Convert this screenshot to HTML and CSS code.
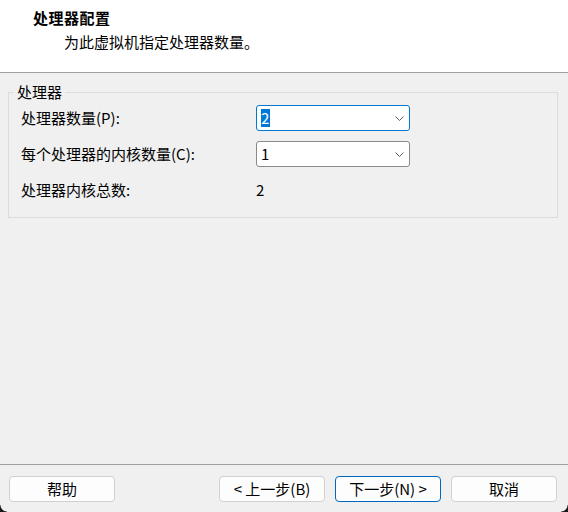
FILE: index.html
```html
<!DOCTYPE html>
<html lang="zh-CN">
<head>
<meta charset="utf-8">
<title>处理器配置</title>
<link rel="stylesheet" href="styles.css">
</head>
<body>
<div class="wizard">
  <header class="head">
    <div class="title">处理器配置</div>
    <div class="subtitle">为此虚拟机指定处理器数量。</div>
  </header>
  <main class="content">
    <fieldset class="group">
      <legend class="legend">处理器</legend>
      <div class="rows">
        <label class="lbl">处理器数量(P):</label>
        <div class="combo focused">
          <span class="val sel">2</span>
          <svg class="chev" width="9" height="5" viewBox="0 0 9 5"><path d="M0.5 0.5 L4.5 4.5 L8.5 0.5" fill="none" stroke="#5f5f5f" stroke-width="1"/></svg>
        </div>
        <label class="lbl">每个处理器的内核数量(C):</label>
        <div class="combo">
          <span class="val">1</span>
          <svg class="chev" width="9" height="5" viewBox="0 0 9 5"><path d="M0.5 0.5 L4.5 4.5 L8.5 0.5" fill="none" stroke="#5f5f5f" stroke-width="1"/></svg>
        </div>
        <span class="lbl">处理器内核总数:</span>
        <span class="total">2</span>
      </div>
    </fieldset>
  </main>
  <footer class="foot">
    <button class="btn">帮助</button>
    <div class="spacer"></div>
    <button class="btn">&lt; 上一步(B)</button>
    <button class="btn default">下一步(N) &gt;</button>
    <button class="btn">取消</button>
  </footer>
  <div class="corner left"></div>
  <div class="corner right"></div>
</div>
</body>
</html>
```

FILE: styles.css
```css
* { box-sizing: border-box; }
html, body { margin: 0; padding: 0; }
body {
  background: #f0f0f0;
  font-family: "Noto Sans CJK SC", "Noto Sans", sans-serif;
  font-size: 15px;
  color: #000;
}
.wizard {
  position: relative;
  height: 512px;
  display: flex;
  flex-direction: column;
}
.head {
  height: 73px;
  background: #fff;
  border-bottom: 1px solid #a0a0a0;
  padding: 8px 0 0 33px;
}
.title {
  font-weight: bold;
  line-height: 20px;
  letter-spacing: 0.5px;
}
.subtitle {
  margin-top: 4px;
  margin-left: 31px;
  line-height: 20px;
}
.content {
  flex: 1;
  padding-top: 9px;
}
.group {
  margin: 0 10px 0 8px;
  padding: 0 12px 14px 12px;
  border: 1px solid #dcdcdc;
  min-width: 0;
}
.legend {
  padding: 0 3px;
  margin-left: -7px;
  line-height: 20px;
}
.rows {
  display: grid;
  grid-template-columns: 235px 154px;
  grid-auto-rows: 26px;
  row-gap: 10px;
  padding-top: 3px;
  align-items: center;
}
.lbl { line-height: 26px; }
.combo {
  height: 26px;
  background: #fff;
  border: 1px solid #8a8a8a;
  border-radius: 3px;
  display: flex;
  align-items: center;
  padding: 0 5px 0 4px;
}
.combo.focused { border-color: #0078d4; }
.val {
  flex: 1;
  line-height: 18px;
}
.val.sel {
  flex: 0 0 auto;
  background: #0078d7;
  color: #fff;
  padding: 0 1px 0 0;
  margin-right: auto;
}
.chev { display: block; }
.total { line-height: 26px; }
.foot {
  border-top: 1px solid #a0a0a0;
  height: 48px;
  padding: 11px 11px 10px 9px;
  display: flex;
  gap: 10px;
}
.spacer { flex: 1; }
.btn {
  width: 106px;
  height: 26px;
  background: #fdfdfd;
  border: 1px solid #d0d0d0;
  border-radius: 4px;
  font-family: inherit;
  font-size: 15px;
  color: #000;
  padding: 0;
  line-height: 22px;
}
.btn.default { border-color: #0067c0; }
.corner {
  position: absolute;
  bottom: 0;
  width: 7px;
  height: 7px;
}
.corner.left {
  left: 0;
  background: radial-gradient(circle at 100% 0, transparent 6px, #1a1a1a 7px);
}
.corner.right {
  right: 0;
  background: radial-gradient(circle at 0 0, transparent 6px, #1a1a1a 7px);
}
```
